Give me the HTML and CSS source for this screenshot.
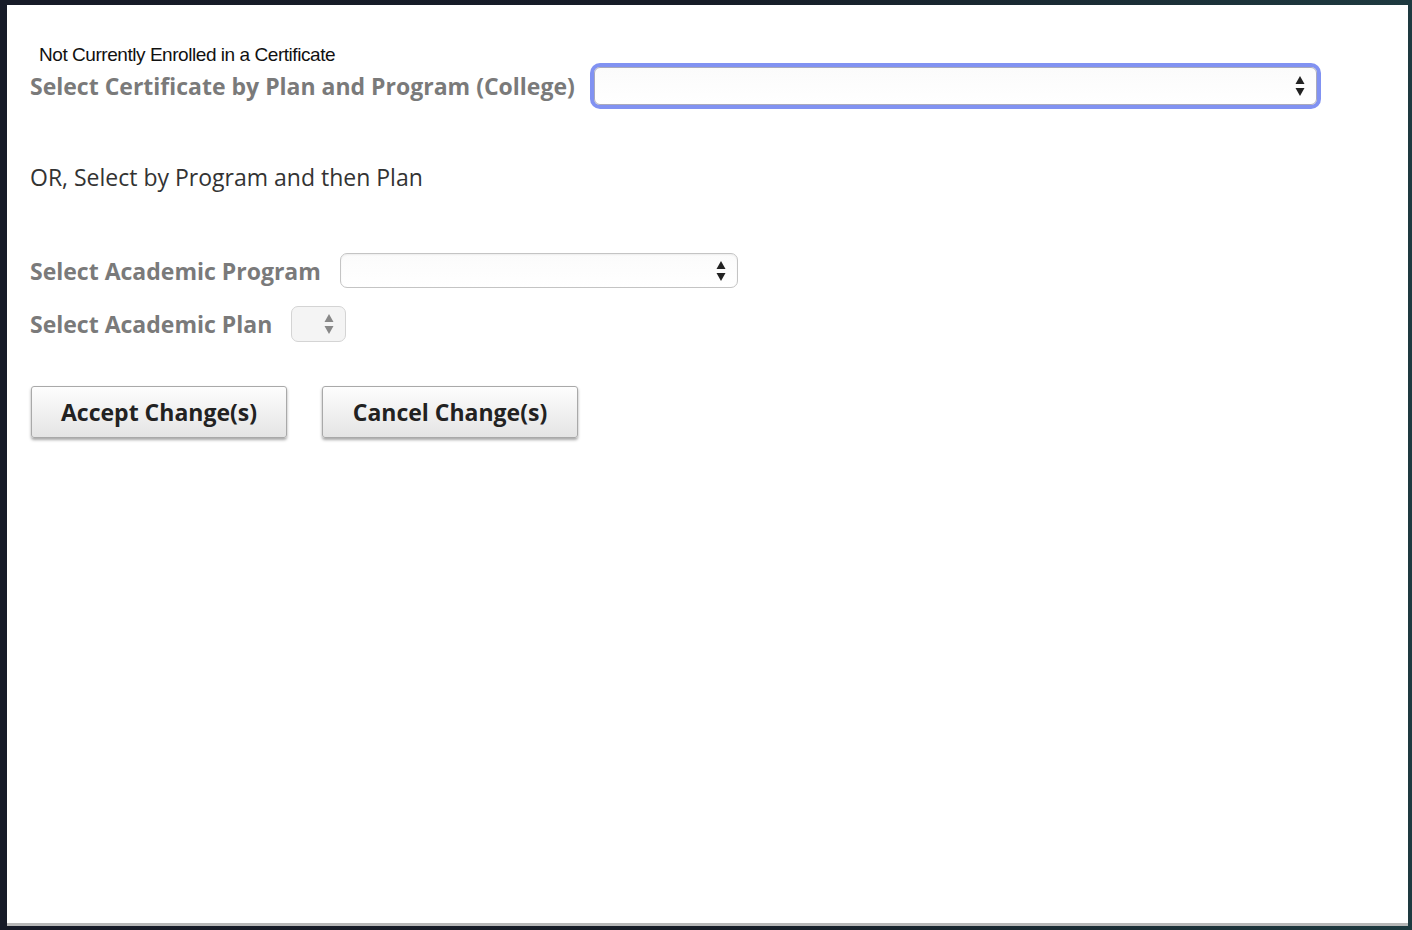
FILE: index.html
```html
<!DOCTYPE html>
<html>
<head>
<meta charset="utf-8">
<link rel="stylesheet" href="styles.css">
</head>
<body>
<div class="frame">
  <div class="page">
    <div class="status">Not Currently Enrolled in a Certificate</div>
    <div class="row row-cert">
      <span class="label">Select Certificate by Plan and Program (College)</span>
      <div class="select select-cert"><span class="arrows"><svg width="10" height="22" viewBox="0 0 10 22"><path d="M5 1 L9.5 9 L0.5 9 Z" fill="#222"/><path d="M5 21 L9.5 13 L0.5 13 Z" fill="#222"/></svg></span></div>
    </div>
    <div class="or">OR, Select by Program and then Plan</div>
    <div class="row row-prog">
      <span class="label">Select Academic Program</span>
      <div class="select select-prog"><span class="arrows"><svg width="10" height="22" viewBox="0 0 10 22"><path d="M5 1 L9.5 9 L0.5 9 Z" fill="#222"/><path d="M5 21 L9.5 13 L0.5 13 Z" fill="#222"/></svg></span></div>
    </div>
    <div class="row row-plan">
      <span class="label">Select Academic Plan</span>
      <div class="select select-plan"><span class="arrows"><svg width="10" height="22" viewBox="0 0 10 22"><path d="M5 1 L9.5 9 L0.5 9 Z" fill="#888"/><path d="M5 21 L9.5 13 L0.5 13 Z" fill="#888"/></svg></span></div>
    </div>
    <div class="buttons">
      <button class="btn">Accept Change(s)</button>
      <button class="btn">Cancel Change(s)</button>
    </div>
  </div>
</div>
</body>
</html>
```
FILE: styles.css
```css
html, body {
  margin: 0;
  padding: 0;
  width: 1412px;
  height: 930px;
  overflow: hidden;
}
body {
  background: #161b26;
}
.frame {
  padding: 5px 4px 4px 7px;
  height: 930px;
  box-sizing: border-box;
  background: linear-gradient(to right, #171b28 0, #161c27 50%, #1e3a40 100%);
}
.page {
  background: #fff;
  height: 921px;
  box-sizing: border-box;
  border-bottom: 3px solid #b8b8b8;
  padding: 39px 0 0 23px;
  font-family: "Open Sans", sans-serif;
}
.status {
  font-family: "Liberation Sans", Arial, sans-serif;
  font-size: 19px;
  letter-spacing: -0.45px;
  color: #111;
  margin-left: 9px;
  line-height: 22px;
}
.row {
  display: flex;
  align-items: center;
}
.label {
  font-weight: 700;
  font-size: 23px;
  line-height: 30px;
  color: #7a7a7a;
}
.row-cert {
  margin-top: 1px;
}
.select {
  position: relative;
  box-sizing: border-box;
  background: linear-gradient(#fbfbfb, #ffffff);
  border: 1px solid #c4c4c4;
  border-radius: 7px;
}
.arrows {
  position: absolute;
  right: 11px;
  top: 50%;
  transform: translateY(-50%);
  display: flex;
}
.select-cert {
  margin-left: 19px;
  width: 723px;
  height: 38px;
  border: 1px solid #aab;
  box-shadow: 0 0 0 4px #8192f2;
  border-radius: 6px;
}
.or {
  margin-top: 57px;
  font-size: 23px;
  color: #333;
  line-height: 30px;
}
.row-prog {
  margin-top: 61px;
}
.select-prog {
  margin-left: 19px;
  width: 398px;
  height: 35px;
  box-shadow: inset 0 1px 2px rgba(0,0,0,0.06);
}
.row-plan {
  margin-top: 18px;
}
.select-plan {
  margin-left: 19px;
  width: 55px;
  height: 36px;
  background: #f4f4f4;
  border-color: #d4d4d4;
}
.buttons {
  display: flex;
  gap: 35px;
  margin-top: 44px;
  margin-left: 1px;
}
.btn {
  width: 256px;
  height: 52px;
  font-family: "Open Sans", sans-serif;
  font-weight: 700;
  font-size: 23px;
  color: #222;
  background: linear-gradient(#fdfdfd, #e4e4e4);
  border: 1px solid #a9a9a9;
  border-radius: 3px;
  box-shadow: 0 2px 3px rgba(0,0,0,0.35);
  padding: 0;
}
```
